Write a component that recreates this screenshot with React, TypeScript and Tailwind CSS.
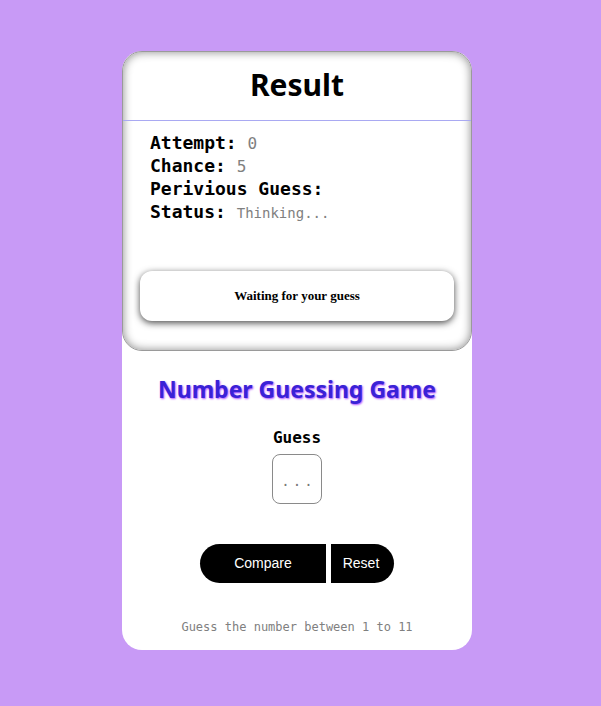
import React from "react";

export default function App() {
  return (
    <div className="min-h-[706px] w-full bg-[#c89af6] flex justify-center pt-[51px] pr-[7px]">
      <div className="w-[350px] h-[599px] bg-white rounded-[20px] flex flex-col items-center">
        <div className="w-full h-[300px] rounded-[20px] border border-[#9a9a9a] shadow-[inset_0_0_10px_#8a8a8a] flex flex-col">
          <div className="h-[69px] pb-[3px] flex items-center justify-center border-b border-[#a9a9f2] text-[30px] font-bold text-black font-['Noto_Sans','Open_Sans',sans-serif]">
            Result
          </div>
          <div className="px-[27px] pt-[10px] text-[18px] font-bold text-black font-['DejaVu_Sans_Mono','Liberation_Mono',monospace]">
            <div className="h-[23px] leading-[23px]">
              Attempt: <span className="font-normal text-[16px] leading-none text-[#808080]">0</span>
            </div>
            <div className="h-[23px] leading-[23px]">
              Chance: <span className="font-normal text-[16px] leading-none text-[#808080]">5</span>
            </div>
            <div className="h-[23px] leading-[23px]">Perivious Guess:</div>
            <div className="h-[23px] leading-[23px]">
              Status: <span className="font-normal text-[14px] leading-none text-[#808080]">Thinking...</span>
            </div>
          </div>
          <div className="mt-auto mb-[29px] mx-[17px] h-[50px] rounded-[12px] bg-white shadow-[0_2px_7px_#4a4a4a] flex items-center justify-center">
            <span className="text-[13px] font-bold text-black font-['Liberation_Serif','Times_New_Roman',serif]">
              Waiting for your guess
            </span>
          </div>
        </div>
        <div className="mt-[22px] text-[23px] leading-[32px] font-bold text-[#3a22d6] [text-shadow:1px_1px_2px_#b050ff] font-['Noto_Sans','Open_Sans',sans-serif]">
          Number Guessing Game
        </div>
        <div className="mt-[21px] text-[16px] leading-[24px] font-bold text-black font-['DejaVu_Sans_Mono','Liberation_Mono',monospace]">
          Guess
        </div>
        <input
          className="mt-[4px] w-[50px] h-[50px] pl-[3px] pt-[3px] rounded-[8px] border border-[#8a8a8a] text-center text-[14px] tracking-[3px] outline-none placeholder:text-[#777] font-['DejaVu_Sans_Mono','Liberation_Mono',monospace]"
          placeholder="..."
        />
        <div className="mt-[40px] flex gap-[5px]">
          <button className="w-[126px] h-[39px] bg-black text-white text-[14px] rounded-l-full font-['Liberation_Sans',Arial,sans-serif]">
            Compare
          </button>
          <button className="w-[63px] h-[39px] bg-black text-white text-[14px] rounded-r-full pr-[3px] font-['Liberation_Sans',Arial,sans-serif]">
            Reset
          </button>
        </div>
        <div className="mt-[36px] text-[12px] leading-[16px] text-[#808080] font-['DejaVu_Sans_Mono','Liberation_Mono',monospace]">
          Guess the number between 1 to 11
        </div>
      </div>
    </div>
  );
}
